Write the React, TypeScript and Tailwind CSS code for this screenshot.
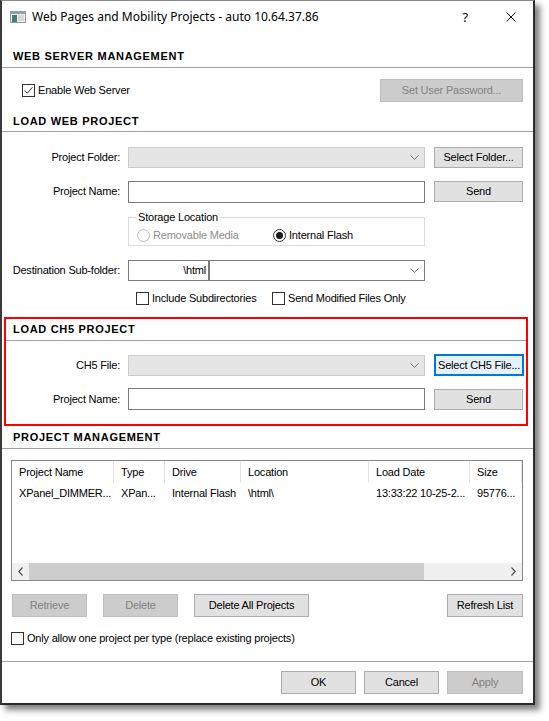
import clsx from "clsx";

const ui = "font-['Liberation_Sans',Arial,sans-serif] text-[11px] leading-[13px] tracking-[-0.2px] text-black";

function Chevron({ dir = "down" }: { dir?: "down" | "left" | "right" }) {
  if (dir === "left")
    return (
      <svg width="5" height="9" viewBox="0 0 5 9">
        <path d="M4.5 0.5 L0.8 4.5 L4.5 8.5" fill="none" stroke="#505050" strokeWidth="1.2" />
      </svg>
    );
  if (dir === "right")
    return (
      <svg width="5" height="9" viewBox="0 0 5 9">
        <path d="M0.5 0.5 L4.2 4.5 L0.5 8.5" fill="none" stroke="#505050" strokeWidth="1.2" />
      </svg>
    );
  return (
    <svg width="9" height="5" viewBox="0 0 9 5">
      <path d="M0.5 0.5 L4.5 4.3 L8.5 0.5" fill="none" stroke="#707070" strokeWidth="1" />
    </svg>
  );
}

function Btn({
  label,
  disabled,
  focused,
  className,
}: {
  label: string;
  disabled?: boolean;
  focused?: boolean;
  className?: string;
}) {
  return (
    <div
      className={clsx(
        "flex items-center justify-center shrink-0",
        disabled
          ? "bg-[#cccccc] border border-[#bfbfbf] text-[#838383]"
          : focused
            ? "bg-[#e5f1fb] border-2 border-[#0078d7] text-black"
            : "bg-[#e1e1e1] border border-[#adadad] text-black",
        className
      )}
    >
      {label}
    </div>
  );
}

function Check({ checked, label }: { checked?: boolean; label: string }) {
  return (
    <div className="flex items-center h-[13px]">
      <span className="w-[13px] h-[13px] border border-[#333333] bg-white flex items-center justify-center">
        {checked && (
          <svg width="11" height="11" viewBox="0 0 11 11">
            <path d="M1.5 5.5 L4.2 8.2 L9.5 2.2" fill="none" stroke="#333333" strokeWidth="1" />
          </svg>
        )}
      </span>
      <span className="ml-[3px]">{label}</span>
    </div>
  );
}

function Radio({ selected, disabled, label }: { selected?: boolean; disabled?: boolean; label: string }) {
  return (
    <div className="flex items-center h-[13px]">
      <span
        className={clsx(
          "w-[13px] h-[13px] rounded-full border bg-white flex items-center justify-center",
          disabled ? "border-[#bcbcbc]" : "border-[#333333]"
        )}
      >
        {selected && <span className="w-[7px] h-[7px] rounded-full bg-[#1a1a1a]" />}
      </span>
      <span className={clsx("ml-[3px]", disabled && "text-[#8c8c8c]")}>{label}</span>
    </div>
  );
}

function Combo({ disabled, className }: { disabled?: boolean; className?: string }) {
  return (
    <div
      className={clsx(
        "h-[21px] border flex items-center justify-end pr-[5px]",
        disabled ? "bg-[#e5e5e5] border-[#cccccc]" : "bg-white border-[#7a7a7a]",
        className
      )}
    >
      <Chevron />
    </div>
  );
}

function Header({ title, className }: { title: string; className: string }) {
  return (
    <div
      className={clsx(
        "flex items-end border-b border-[#a0a0a0] font-bold tracking-[0.7px]",
        className
      )}
    >
      {title}
    </div>
  );
}

const columns = [
  { name: "Project Name", value: "XPanel_DIMMER...", w: "w-[102px]" },
  { name: "Type", value: "XPan...", w: "w-[51px]" },
  { name: "Drive", value: "Internal Flash", w: "w-[76px]" },
  { name: "Location", value: "\\html\\", w: "w-[128px]" },
  { name: "Load Date", value: "13:33:22 10-25-2...", w: "w-[101px]" },
  { name: "Size", value: "95776...", w: "w-[52px]" },
];

function ProjectTable() {
  return (
    <div className="ml-[9px] w-[512px] h-[121px] border border-[#828790] flex flex-col">
      <div className="flex h-[22px]">
        {columns.map((c) => (
          <div
            key={c.name}
            className={clsx(c.w, "h-full pl-[7px] flex items-center border-r border-[#e5e5e5] whitespace-nowrap overflow-hidden")}
          >
            {c.name}
          </div>
        ))}
      </div>
      <div className="flex h-[20px]">
        {columns.map((c) => (
          <div key={c.name} className={clsx(c.w, "h-full pl-[7px] flex items-center whitespace-nowrap overflow-hidden")}>
            {c.value}
          </div>
        ))}
      </div>
      <div className="flex-1" />
      <div className="h-[17px] bg-[#f0f0f0] flex">
        <div className="w-[17px] flex items-center justify-center">
          <Chevron dir="left" />
        </div>
        <div className="w-[395px] bg-[#cdcdcd]" />
        <div className="flex-1" />
        <div className="w-[17px] flex items-center justify-center">
          <Chevron dir="right" />
        </div>
      </div>
    </div>
  );
}

export default function App() {
  return (
    <div className={clsx("w-[549px] h-[721px] bg-white", ui)}>
      <div className="w-[535px] h-[705px] bg-white flex flex-col border-t border-l-2 border-r-2 border-b-2 border-t-[#8a8a8a] border-l-[#3a3a3a] border-r-[#2b2b2b] border-b-[#2b2b2b] shadow-[5px_5px_6px_rgba(0,0,0,0.5)]">
        {/* title bar */}
        <div className="h-[32px] flex items-center shrink-0">
          <svg width="16" height="12" viewBox="0 0 16 12" className="ml-[8px]">
            <rect x="0.5" y="0.5" width="15" height="11" fill="#f2f2f2" stroke="#9a9a9a" />
            <rect x="1" y="1" width="14" height="2" fill="#8fa0b0" />
            <rect x="2" y="4" width="5" height="7" fill="#3f7f80" />
            <rect x="8" y="4" width="6" height="6" fill="#d8d8d8" />
          </svg>
          <span className="ml-[6px] font-['Noto_Sans',sans-serif] text-[12px] leading-[16px] tracking-normal">
            Web Pages and Mobility Projects - auto 10.64.37.86
          </span>
          <span className="ml-auto font-['Noto_Sans',sans-serif] text-[13px]">?</span>
          <svg width="10" height="10" viewBox="0 0 10 10" className="ml-[38px] mr-[17px]">
            <path d="M0.5 0.5 L9.5 9.5 M9.5 0.5 L0.5 9.5" stroke="#111" strokeWidth="1" />
          </svg>
        </div>

        {/* web server */}
        <Header title="WEB SERVER MANAGEMENT" className="h-[35px] pl-[11px] pb-[4px]" />
        <div className="mt-[11px] h-[23px] flex items-center">
          <div className="ml-[20px]">
            <Check checked label="Enable Web Server" />
          </div>
          <Btn label="Set User Password..." disabled className="ml-auto mr-[10px] w-[143px] h-[23px]" />
        </div>

        {/* web project */}
        <Header title="LOAD WEB PROJECT" className="h-[30px] pl-[11px] pb-[3px]" />
        <div className="mt-[14px] h-[22px] flex items-center">
          <span className="w-[126px] pr-[8px] text-right">Project Folder:</span>
          <Combo disabled className="w-[297px]" />
          <Btn label="Select Folder..." className="ml-[9px] w-[89px] h-[21px]" />
        </div>
        <div className="mt-[12px] h-[23px] flex items-center">
          <span className="w-[126px] pr-[8px] text-right">Project Name:</span>
          <div className="w-[297px] h-[22px] border border-[#7a7a7a] bg-white" />
          <Btn label="Send" className="ml-[9px] w-[89px] h-[21px]" />
        </div>
        <fieldset className="mt-[8px] ml-[126px] w-[297px] border border-[#dcdcdc] px-[8px] pb-[3px]">
          <legend className="px-[1px]">Storage Location</legend>
          <div className="mt-[5px] flex">
            <div className="w-[136px]">
              <Radio disabled label="Removable Media" />
            </div>
            <Radio selected label="Internal Flash" />
          </div>
        </fieldset>
        <div className="mt-[14px] h-[21px] flex items-center">
          <span className="w-[126px] pr-[8px] text-right">Destination Sub-folder:</span>
          <div className="w-[81px] h-[21px] border border-[#7a7a7a] bg-white flex items-center justify-end pr-[2px]">
            \html
          </div>
          <Combo className="w-[216px]" />
        </div>
        <div className="mt-[11px] h-[13px] flex ml-[134px]">
          <div className="w-[136px]">
            <Check label="Include Subdirectories" />
          </div>
          <Check label="Send Modified Files Only" />
        </div>

        {/* ch5 project */}
        <div className="mt-[12px] ml-[2px] w-[524px] border-2 border-[#ff0000] pb-[14px] flex flex-col">
          <Header title="LOAD CH5 PROJECT" className="h-[22px] pl-[7px] pb-[4px]" />
          <div className="mt-[13px] h-[22px] flex items-center">
            <span className="w-[122px] pr-[8px] text-right">CH5 File:</span>
            <Combo disabled className="w-[297px]" />
            <Btn label="Select CH5 File..." focused className="ml-[9px] w-[90px] h-[22px]" />
          </div>
          <div className="mt-[12px] h-[22px] flex items-center">
            <span className="w-[122px] pr-[8px] text-right">Project Name:</span>
            <div className="w-[297px] h-[22px] border border-[#7a7a7a] bg-white" />
            <Btn label="Send" className="ml-[9px] w-[89px] h-[21px]" />
          </div>
        </div>

        {/* project management */}
        <Header title="PROJECT MANAGEMENT" className="h-[23px] pl-[11px] pb-[4px]" />
        <div className="mt-[11px]">
          <ProjectTable />
        </div>
        <div className="mt-[13px] h-[23px] flex">
          <Btn label="Retrieve" disabled className="ml-[10px] w-[75px] h-[23px]" />
          <Btn label="Delete" disabled className="ml-[16px] w-[75px] h-[23px]" />
          <Btn label="Delete All Projects" className="ml-[16px] w-[115px] h-[23px]" />
          <Btn label="Refresh List" className="ml-auto mr-[10px] w-[76px] h-[23px]" />
        </div>
        <div className="mt-[15px] ml-[9px]">
          <Check label="Only allow one project per type (replace existing projects)" />
        </div>
        <div className="mt-[16px] h-px bg-[#a0a0a0]" />
        <div className="mt-[9px] h-[23px] flex justify-end gap-[8px] pr-[10px]">
          <Btn label="OK" className="w-[75px] h-[23px]" />
          <Btn label="Cancel" className="w-[75px] h-[23px]" />
          <Btn label="Apply" disabled className="w-[76px] h-[23px]" />
        </div>
      </div>
    </div>
  );
}
